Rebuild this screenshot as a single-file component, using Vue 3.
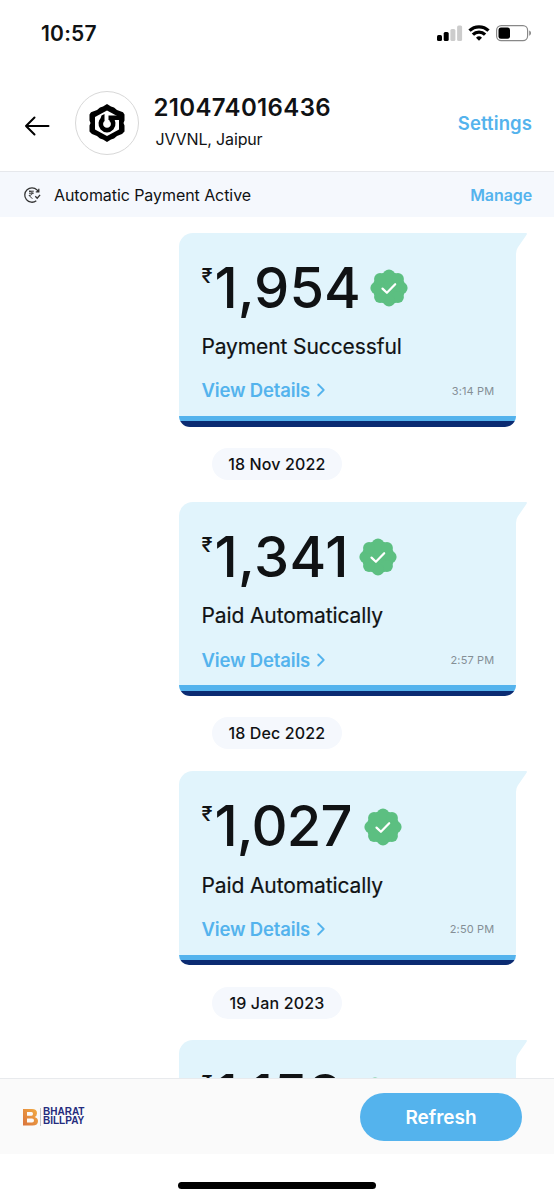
<script setup>
const entries = [
  { amount: '1,954', status: 'Payment Successful', time: '3:14 PM', date: '18 Nov 2022', w: 141.5, spacing: 0 },
  { amount: '1,341', status: 'Paid Automatically', time: '2:57 PM', date: '18 Dec 2022', w: 131, spacing: 0.4 },
  { amount: '1,027', status: 'Paid Automatically', time: '2:50 PM', date: '19 Jan 2023', w: 135.5, spacing: -0.8 },
  { amount: '1,153', status: '', time: '', date: '', w: 128, spacing: 0 },
]
const lobes = Array.from({ length: 8 }, (_, i) => ({
  x: 19 + 12.6 * Math.sin((i * Math.PI) / 4),
  y: 19 - 12.6 * Math.cos((i * Math.PI) / 4),
}))
</script>

<template>
  <div class="screen">
    <div class="status-bar">
      <span class="clock">10:57</span>
      <svg class="system" width="95" height="20" viewBox="0 0 95 20">
        <rect x="0" y="11" width="5" height="6" rx="1.5" />
        <rect x="6.7" y="8" width="5" height="9" rx="1.5" />
        <rect x="13.4" y="5" width="5" height="12" rx="1.5" fill="#ccc" />
        <rect x="20.1" y="1.5" width="5" height="15.500" rx="1.5" fill="#ccc" />
        <g fill="none" stroke="#000" stroke-width="3.200">
          <path d="M32.500 6.700a13.500 13.500 0 0 1 19 0" />
          <path d="M35.900 10.700a8.500 8.500 0 0 1 12.200 0" />
        </g>
        <path d="M42 16.800l-3-3.100a4.500 4.500 0 0 1 6 0z" />
        <rect x="59.600" y="1.600" width="31" height="15" rx="4.600" fill="none" stroke="#888" stroke-width="1.200" />
        <rect x="61.500" y="3.500" width="11.500" height="11.200" rx="2.500" />
        <path d="M92.200 6.500c2.400 1 2.400 4.200 0 5.200z" fill="#888" />
      </svg>
    </div>

    <header class="header">
      <svg class="back" width="26" height="22" viewBox="0 0 26 22">
        <path d="M24.500 11H2M10.500 2.500L2 11l8.500 8.500" />
      </svg>
      <div class="avatar">
        <svg width="38" height="40" viewBox="0 0 38 40">
          <path d="M19 1L23 3.500L26 4.500L29 7L35 9.300L36.500 11.500V17.500L35.500 20L36.500 22.500V28.500L34 31L29 33L26 35.500L23 36.500L19 39L15 36.500L12 35.500L9 33L4 31L1.500 28.500V22.500L2.500 20L1.500 17.500V11.500L3 9.300L9 7L12 4.500L15 3.500Z" />
          <path d="M19 7.500L31 14V26.500L19 33L7 26.500V14Z" fill="#fff" />
          <path d="M15.500 15.800a6.200 6.200 0 1 0 7 0" fill="none" stroke="#000" stroke-width="4.600" />
          <path d="M20.500 12.500H36V17H20.500zM13.500 12.500L16.500 11V17H12z" />
        </svg>
      </div>
      <div class="account">
        <h1>210474016436</h1>
        <p>JVVNL, Jaipur</p>
      </div>
      <a class="settings">Settings</a>
    </header>

    <div class="banner">
      <svg class="auto" width="18" height="18" viewBox="0 0 18 18">
        <path d="M13.300 14.800A7.200 7.200 0 1 1 14 3.900l1.200 1.600M15.800 2.800v3h-3M12.300 10.300l1.900 1.900 2.900-3.400" />
        <path class="auto-rupee" d="M6 5.200h4.800M6 7.200h4.800M6 5.200c4.300 0 4.300 4.200 0 4.200l3.300 3.300" />
      </svg>
      <span class="banner-text">Automatic Payment Active</span>
      <a class="manage">Manage</a>
    </div>

    <main class="timeline">
      <section v-for="entry in entries" :key="entry.amount" class="entry">
        <article class="card">
          <svg class="tail" width="11" height="21" viewBox="0 0 11 21">
            <path d="M0 0H10Q11.500 .3 10.600 1.800L1.800 14.500Q0 17 0 21Z" />
          </svg>
          <div class="amount-row">
            <span class="rupee">₹</span>
            <span class="amount" :style="{ width: entry.w + 'px', letterSpacing: entry.spacing + 'px' }">{{ entry.amount }}</span>
            <svg class="badge" width="38" height="38" viewBox="0 0 38 38">
              <circle cx="19" cy="19" r="16.300" />
              <circle v-for="(lobe, i) in lobes" :key="i" :cx="lobe.x" :cy="lobe.y" r="6" />
              <path d="M12.500 19.600l4.400 4.200 8.300-8.600" />
            </svg>
          </div>
          <template v-if="entry.status">
            <p class="status">{{ entry.status }}</p>
            <div class="details">
              <a>View Details</a>
              <svg class="chevron" width="9" height="14" viewBox="0 0 9 14"><path d="M1.200 1.500L6.700 7l-5.500 5.500" /></svg>
              <time>{{ entry.time }}</time>
            </div>
          </template>
          <div class="stripe"></div>
        </article>
        <div v-if="entry.date" class="date">{{ entry.date }}</div>
      </section>
    </main>

    <footer class="footer">
      <div class="billpay">
        <svg width="15" height="17" viewBox="0 0 15 17">
          <defs>
            <linearGradient id="gold" x1="0" y1="1" x2="1" y2="0">
              <stop offset="0" stop-color="#d9733c" />
              <stop offset="1" stop-color="#f3ad43" />
            </linearGradient>
          </defs>
          <path fill="url(#gold)" fill-rule="evenodd" d="M0 0H9Q14 0 14 4.200Q14 7 11.600 8Q15 9 15 12Q15 16.500 9.500 16.500H0ZM4 3V6.700H8.500Q10 6.700 10 4.800Q10 3 8.500 3ZM4 9.500V13.500H9Q11 13.500 11 11.500Q11 9.500 9 9.500Z" />
        </svg>
        <div class="wordmark"><span>BHARAT</span><span>BILLPAY</span></div>
      </div>
      <button class="refresh">Refresh</button>
    </footer>
    <div class="home"><i></i></div>
  </div>
</template>

<style>
body { margin: 0; background: #fff; }
</style>

<style scoped>
* { box-sizing: border-box; }
.screen { width: 554px; height: 1200px; display: flex; flex-direction: column; overflow: hidden; background: #fff; font-family: Inter, "Liberation Sans", sans-serif; color: #101214; }
h1, p { margin: 0; }
.status-bar { height: 76px; flex: none; display: flex; justify-content: space-between; padding: 20px 22px 0 41px; }
.clock { font-size: 21px; line-height: 27px; font-weight: 600; letter-spacing: .2px; }
.system { margin-top: 4px; }
.header { height: 96px; flex: none; display: flex; align-items: center; padding: 0 22px 0 24px; border-bottom: 1px solid #e6e8ec; }
.back { margin-top: 4px; }
.back path { fill: none; stroke: #000; stroke-width: 2; stroke-linecap: round; stroke-linejoin: round; }
.avatar { width: 64px; height: 64px; margin: -1px 0 0 25px; border: 1px solid #d8d8d8; border-radius: 50%; display: flex; align-items: center; justify-content: center; }
.account { flex: 1; margin: -5px 0 0 14.500px; }
h1 { font-size: 24px; line-height: 32px; font-weight: 600; letter-spacing: .35px; }
.account p { font-size: 16px; line-height: 24px; margin: 3px 0 0 2px; letter-spacing: -.15px; }
.settings { margin-top: -1px; font-size: 18.500px; font-weight: 600; letter-spacing: .1px; color: #54b3ed; }
.banner { height: 45px; flex: none; display: flex; align-items: center; padding: 0 22px 0 23px; background: #f5f8fd; }
.auto path { fill: none; stroke: #333; stroke-width: 1.300; }
.auto .auto-rupee { stroke-width: 1; }
.banner-text { flex: 1; margin-left: 13px; font-size: 16px; letter-spacing: -.07px; }
.manage { font-size: 16px; font-weight: 600; letter-spacing: -.1px; color: #54b3ed; }
.timeline { height: 861px; flex: none; overflow: hidden; padding: 15.500px 0 0 179.400px; }
.entry { height: 269.250px; }
.card { position: relative; width: 337px; height: 194px; padding: 28px 22px 0; border-radius: 14px 0 14px 14px; background: #e1f4fc; }
.tail { position: absolute; left: 336.500px; top: 0; fill: #e1f4fc; }
.amount-row { display: flex; height: 55px; }
.rupee { width: 13px; font-size: 20px; line-height: 31px; font-weight: 500; }
.amount { font-size: 56px; line-height: 54px; font-weight: 500; white-space: nowrap; }
.badge { margin: 8.500px 0 0 14px; fill: #5cbf81; }
.badge path { fill: none; stroke: #fff; stroke-width: 2.200; stroke-linecap: round; stroke-linejoin: round; }
.status { margin-top: 17.500px; font-size: 21px; line-height: 28px; letter-spacing: -.1px; -webkit-text-stroke: .2px; }
.details { display: flex; align-items: center; height: 28px; margin-top: 15.300px; }
.details a { font-size: 18.500px; font-weight: 600; letter-spacing: -.15px; color: #54b3ed; }
.chevron { margin-left: 6.500px; fill: none; stroke: #54b3ed; stroke-width: 1.800; stroke-linecap: round; stroke-linejoin: round; }
time { margin: 1px 0 0 auto; font-size: 11px; letter-spacing: .15px; color: #858f96; }
.stripe { position: absolute; left: 0; right: 0; bottom: 0; height: 10.500px; border-radius: 0 0 14px 14px; background: linear-gradient(#54b3ed 50%, #0b2b72 50%); }
.date { width: 130px; height: 32px; margin: 21.500px 0 0 32.500px; border-radius: 16px; background: #f5f8fd; font-size: 16px; line-height: 32px; font-weight: 500; letter-spacing: .15px; text-align: center; white-space: nowrap; }
.footer { height: 76px; flex: none; display: flex; justify-content: space-between; align-items: center; padding: 0 32px 0 23px; background: #fafafa; border-top: 1px solid #e8eaed; }
.billpay { display: flex; align-items: center; margin-top: 1px; }
.wordmark { display: flex; flex-direction: column; margin-left: 2px; padding-left: 2px; border-left: 1px solid #c5c6cc; color: #252b7d; font: 700 10px/8.800px "Liberation Sans", sans-serif; }
.refresh { width: 162px; height: 48px; padding: 2px 0 0; border: 0; border-radius: 24px; background: #54b3ed; color: #fff; font: 600 19px Inter, sans-serif; }
.home { padding: 28px 0 0 178px; }
.home i { display: block; width: 198px; height: 7px; border-radius: 4px; background: #000; }
</style>
